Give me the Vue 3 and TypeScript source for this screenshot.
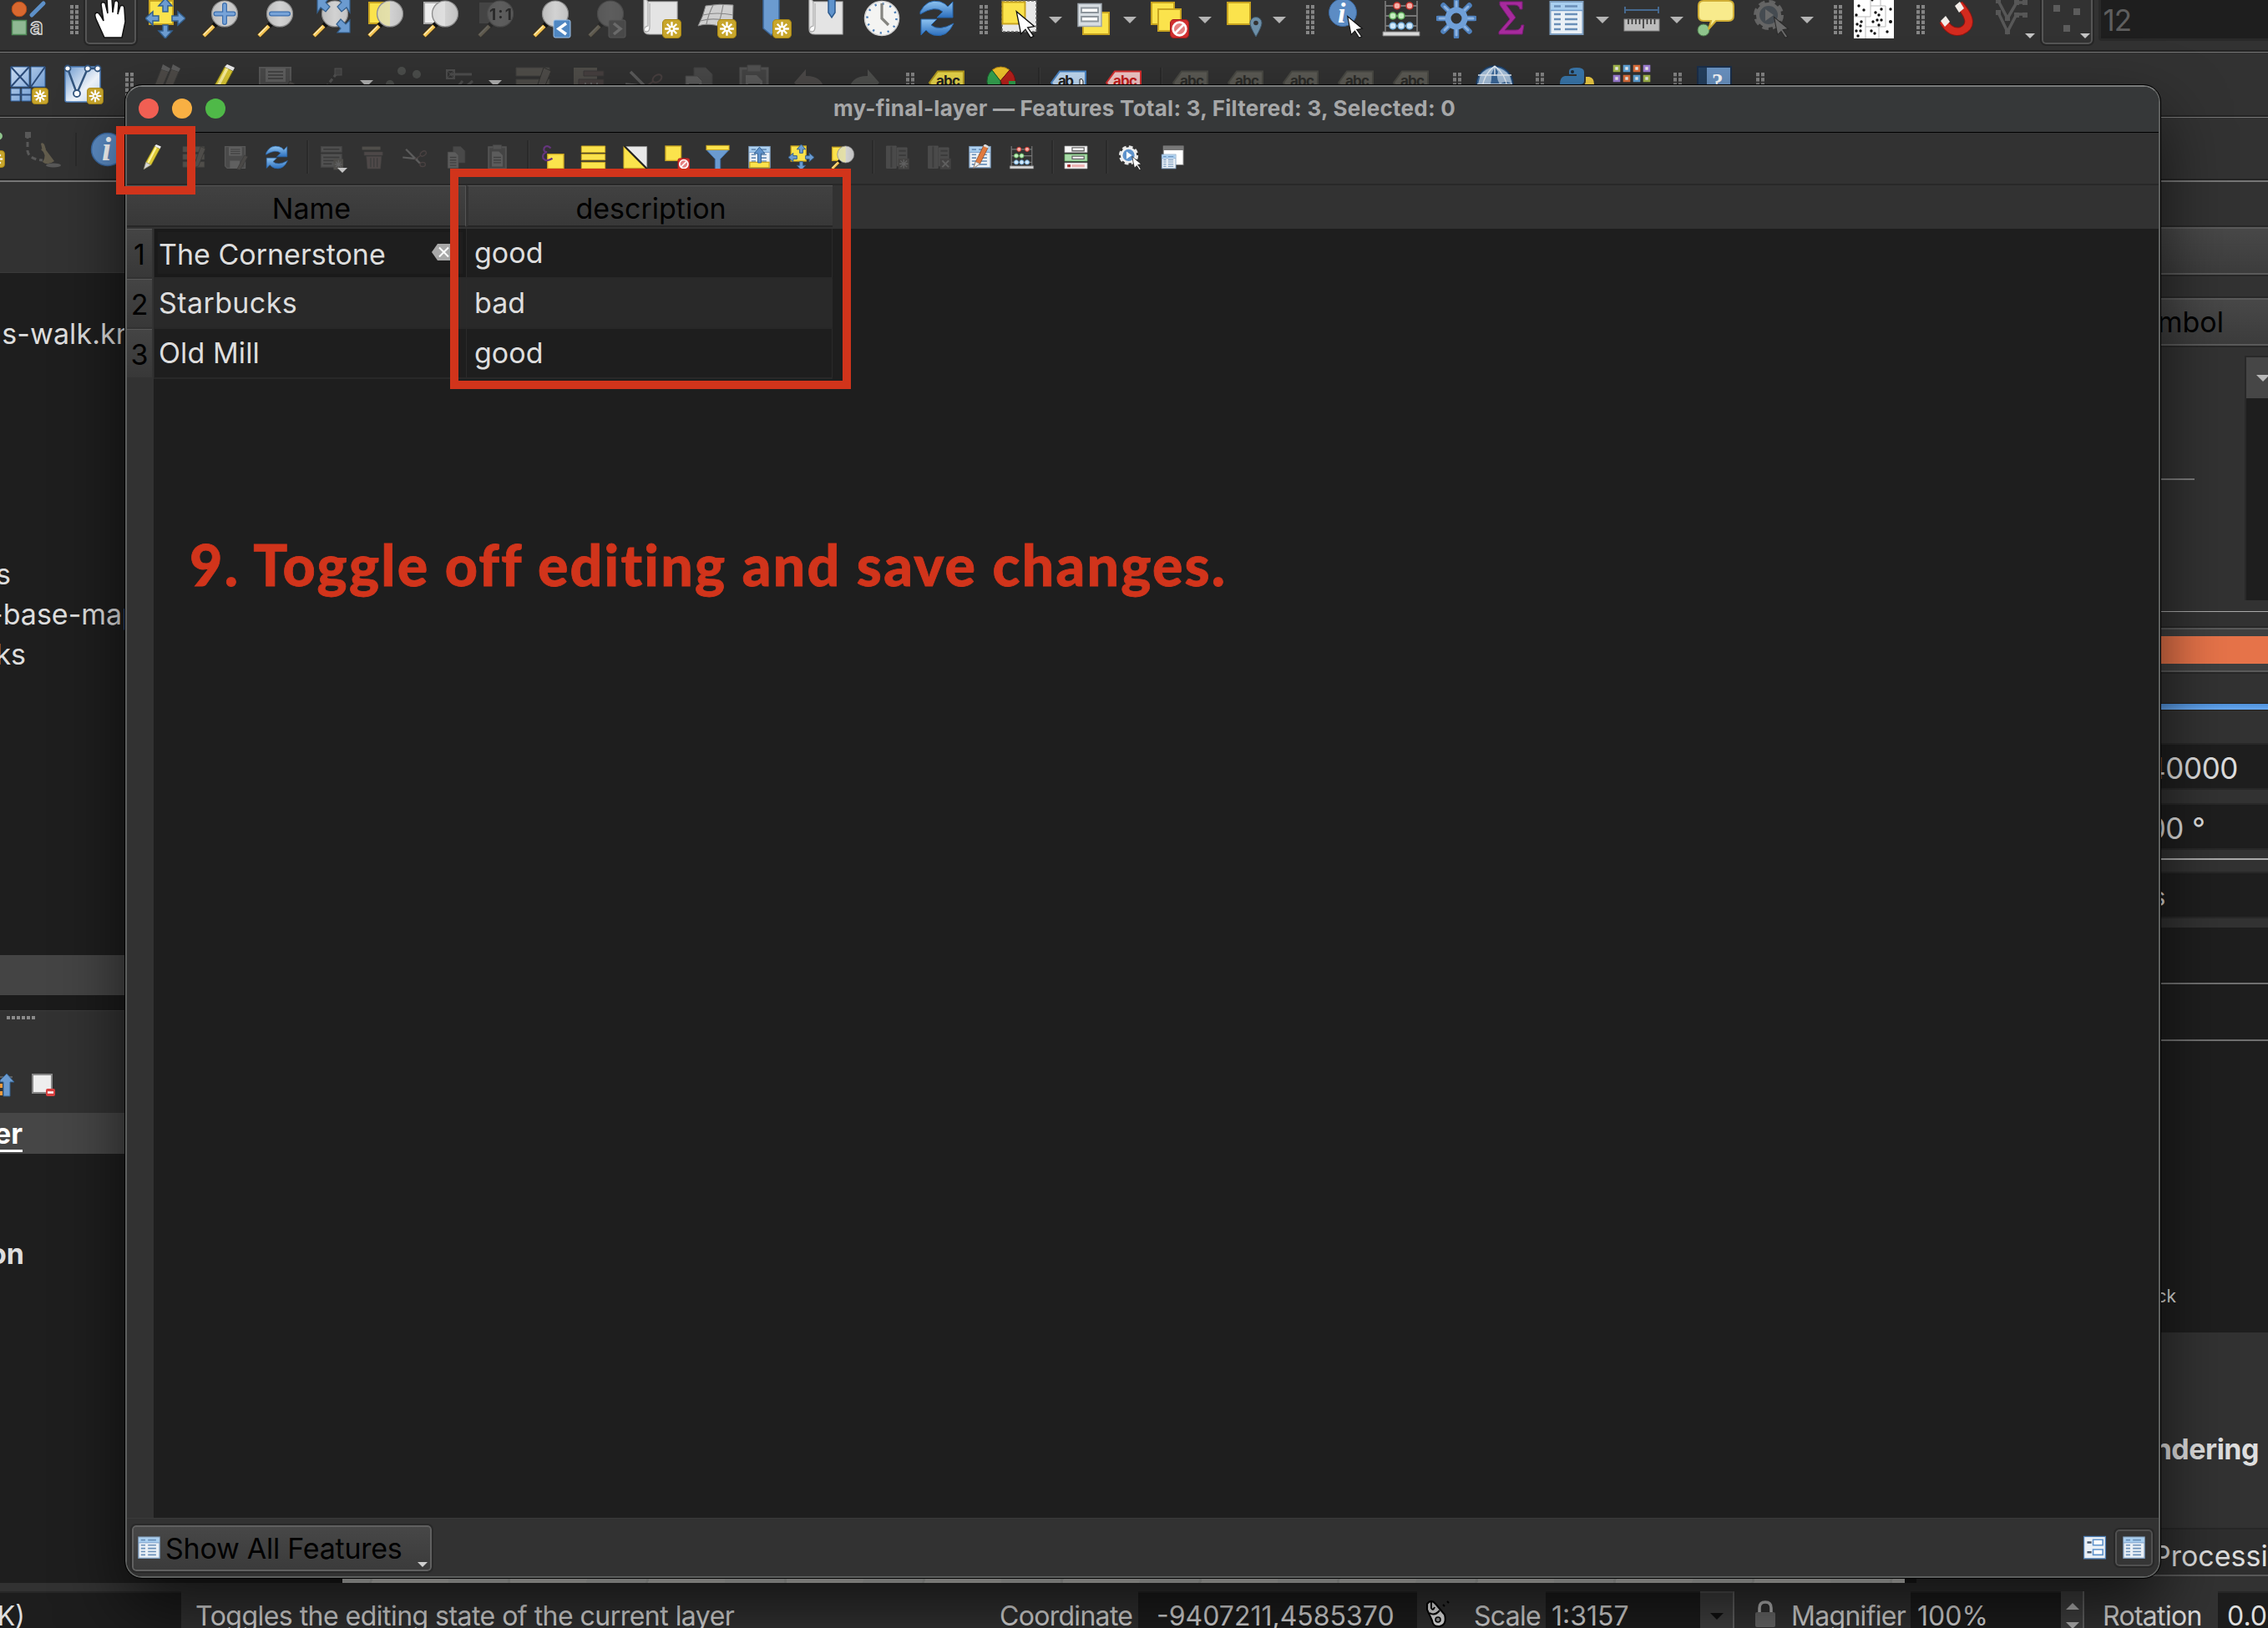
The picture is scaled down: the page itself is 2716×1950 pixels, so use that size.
<script setup lang="ts">
type Kind = 'icon' | 'grip' | 'sep' | 'drop'
interface Item { kind: Kind; name: string; off: boolean; framed: boolean; menu: boolean }

// "|" separator, ":" grip, "v" drop arrow; suffix "-" disabled, "#" framed, "+" corner menu arrow
function parse(spec: string): Item[] {
  return spec.split(' ').map((t) => {
    const kind: Kind = t === '|' ? 'sep' : t === ':' ? 'grip' : t === 'v' ? 'drop' : 'icon'
    return {
      kind,
      name: 'i-' + t.replace(/[-#+]/g, ''),
      off: t.includes('-'),
      framed: t.includes('#'),
      menu: t.includes('+'),
    }
  })
}

const navBar = parse(
  'style : hand# pansel zoomin zoomout zoomfull zoomsel zoomlayer zoomone- zoomlast zoomnext- newmap newmesh newmark marks clock refresh ' +
  ': select v formsel v deselect v locsel v : identify abacus gear sigma table v ruler v tip runact- v : dots : magnet vertex-+ points-#+',
)
const editBar = parse(
  'mesh vlayer : pencils- pencil save- node- v scatter- nodes- v tabedit- tabdel- scissors- copy- paste- undo- redo- ' +
  ': abc pie | abblue abcred | abcgrey abcgrey abcgrey abcgrey abcgrey : globe : python plugins : help :',
)
const tableBar = parse(
  'pencil tabedit- save- refresh | addrow-+ trash- scissors- copy- paste- | expr selall invert desel1 filter totop pansel zoomsel ' +
  '| addcol- delcol- editcol abacus | condfmt | runact dock',
)

interface Row { id: number; name: string; description: string }
const rows: Row[] = [
  { id: 1, name: 'The Cornerstone', description: 'good' },
  { id: 2, name: 'Starbucks', description: 'bad' },
  { id: 3, name: 'Old Mill', description: 'good' },
]
</script>

<template>
  <div class="screen">
    <svg class="defs" width="0" height="0">
      <defs>
        <linearGradient id="g-lens" x1="0" x2="1"><stop offset="0" stop-color="#bdbdbd" /><stop offset=".5" stop-color="#d2d2d2" /><stop offset="1" stop-color="#c2c2c2" /></linearGradient>
        <linearGradient id="g-blue" x1="0" x2="0" y1="0" y2="1"><stop offset="0" stop-color="#8ec3f0" /><stop offset="1" stop-color="#2c6fbe" /></linearGradient>
        <linearGradient id="g-mesh" x1="0" x2="1" y1="0" y2="1"><stop offset="0" stop-color="#c9dcf2" /><stop offset="1" stop-color="#5f8fcb" /></linearGradient>
        <linearGradient id="g-mesh2" x1="0" x2="1" y1="0" y2="1"><stop offset="0" stop-color="#6f9bd0" /><stop offset=".6" stop-color="#f0f5fb" /><stop offset="1" stop-color="#c4d8ee" /></linearGradient>

        <symbol id="p-lens" viewBox="0 0 48 48">
          <path d="M3.5 45.500L16 33" stroke="#3b3120" stroke-width="7" />
          <path d="M4 45L16 33" stroke="#f5c452" stroke-width="4.500" />
          <path d="M4 43.500L14 33.500" stroke="#fff0c0" stroke-width="1.300" />
          <path d="M16 33L20.500 28.500" stroke="#111" stroke-width="6.500" />
          <circle cx="29" cy="18.500" r="15.500" fill="url(#g-lens)" stroke="#8c8c8c" stroke-width="1.200" />
        </symbol>
        <symbol id="p-star" viewBox="0 0 22 22">
          <rect x=".5" y=".5" width="21" height="21" rx="4" fill="#c8a62c" stroke="#a98714" />
          <path d="M11 3V19M3 11H19M5.500 5.500L16.500 16.500M16.500 5.500L5.500 16.500" stroke="#fff" stroke-width="2.300" />
          <circle cx="11" cy="11" r="3.200" fill="#fff" /><circle cx="11" cy="11" r="1.500" fill="#c8a62c" />
        </symbol>
        <symbol id="p-no" viewBox="0 0 22 22">
          <rect x=".5" y=".5" width="21" height="21" rx="4" fill="#cf2f2f" stroke="#a31b1b" />
          <circle cx="11" cy="11" r="7.500" fill="#e58080" stroke="#fff" stroke-width="2.500" /><path d="M6 16L16 6" stroke="#fff" stroke-width="2.500" />
        </symbol>
        <symbol id="p-cursor" viewBox="0 0 28 38">
          <path d="M2 2L26 22L17 23.500L25 35L21 37L14 26L8 32Z" fill="#fff" stroke="#111" stroke-width="1.500" />
        </symbol>
        <symbol id="p-arrows" viewBox="0 0 48 48">
          <path d="M24 0L32 9H27V16H21V9H16ZM24 48L32 39H27V32H21V39H16ZM0 24L9 16V21H16V27H9V32ZM48 24L39 16V21H32V27H39V32Z" fill="#6b9bd0" stroke="#33608f" stroke-width="1.500" />
        </symbol>
        <symbol id="p-roll" viewBox="0 0 48 48">
          <path d="M8 4H43V43H10Q3 43 3 37V2Q7 0 8 6Z" fill="#e4e4e4" stroke="#b5b5b5" stroke-width="1.200" /><path d="M8 6V33Q3 34 3.500 39Q10 42 10 34V6" fill="#fafafa" stroke="#aaa" stroke-width="1.200" />
        </symbol>
        <symbol id="p-tag" viewBox="0 0 48 48">
          <path d="M3 22L13 8.500H44V36H13Z" stroke-width="2" />
        </symbol>

        <symbol id="i-style" viewBox="0 0 48 48">
          <circle cx="14" cy="13" r="8.800" fill="#d9682f" stroke="#b54c18" /><path d="M29 20L43 6" stroke="#5d90c8" stroke-width="5" stroke-linecap="round" />
          <rect x="5.500" y="26.500" width="17" height="17" fill="#8fb893" stroke="#4f8a57" stroke-width="1.500" />
          <text x="27" y="43" font-size="27" font-weight="700" fill="#444" stroke="#ddd" stroke-width="1.300">a</text>
        </symbol>
        <symbol id="i-hand" viewBox="0 0 48 48">
          <path d="M17 47L7 25Q4 18 8 17Q11 17 16 27L13 7Q14 3 18 6L21 18L20 0H26L27 17L29 4Q33 1 34 6L33 19L36 9Q41 7 41 13L42 28L38 47Z" fill="#fff" stroke="#111" stroke-width="1.500" />
        </symbol>
        <symbol id="i-pansel" viewBox="0 0 48 48"><rect x="5" y="3" width="28" height="28" fill="#fbe34c" stroke="#c8a420" stroke-width="2" /><use href="#p-arrows" /></symbol>
        <symbol id="i-zoomin" viewBox="0 0 48 48"><use href="#p-lens" /><path d="M29 8V29M18.500 18.500H39.500" stroke="#3c6fae" stroke-width="6" stroke-linecap="round" /><path d="M29 8V29M18.500 18.500H39.500" stroke="#77a3d8" stroke-width="3.500" stroke-linecap="round" /></symbol>
        <symbol id="i-zoomout" viewBox="0 0 48 48"><use href="#p-lens" /><path d="M19 18.500H39" stroke="#3c6fae" stroke-width="6" stroke-linecap="round" /><path d="M19 18.500H39" stroke="#77a3d8" stroke-width="3.500" stroke-linecap="round" /></symbol>
        <symbol id="i-zoomfull" viewBox="0 0 48 48"><use href="#p-lens" /><path d="M8 0H22L18 5L23 10L18 16L12 11L8 17ZM47 0H33L37 5L32 10L37 16L43 11L47 17ZM47 41H32L36 36L31 31L36 25L42 31L47 26Z" fill="#6b9bd0" stroke="#33608f" stroke-width="1.200" /></symbol>
        <symbol id="i-zoomsel" viewBox="0 0 48 48"><rect x="4" y="5" width="22" height="25" fill="#fbe34c" stroke="#c8a420" stroke-width="2" /><use href="#p-lens" /><path d="M29 4A14.500 14.500 0 0 0 29 33Z" fill="#e9e3a0" opacity=".8" /></symbol>
        <symbol id="i-zoomlayer" viewBox="0 0 48 48"><rect x="4" y="5" width="22" height="25" fill="#eee" stroke="#aaa" stroke-width="2" /><use href="#p-lens" /><path d="M29 4A14.500 14.500 0 0 0 29 33Z" fill="#e6e6e6" opacity=".7" /></symbol>
        <symbol id="i-zoomone" viewBox="0 0 48 48"><rect x="4" y="5" width="22" height="25" fill="#777" /><use href="#p-lens" /><text x="16" y="26" font-size="19" font-weight="700" fill="#111" textLength="27">1:1</text></symbol>
        <symbol id="i-zoomlast" viewBox="0 0 48 48"><use href="#p-lens" /><rect x="27" y="26" width="20" height="21" rx="2" fill="#4f87c2" stroke="#9fc2e8" /><path d="M42 30L33 36.500L42 43" fill="none" stroke="#fff" stroke-width="3.500" /></symbol>
        <symbol id="i-zoomnext" viewBox="0 0 48 48"><use href="#p-lens" /><rect x="27" y="26" width="20" height="21" rx="2" fill="#888" stroke="#bbb" /><path d="M33 30L41 36.500L33 43" fill="none" stroke="#fff" stroke-width="3.500" /></symbol>
        <symbol id="i-newmap" viewBox="0 0 48 48"><use href="#p-roll" /><use href="#p-star" x="25" y="25" width="23" height="23" /></symbol>
        <symbol id="i-newmesh" viewBox="0 0 48 48"><path d="M2 33Q8 22 11 9Q28 6 44 8L43 38L22 32Q10 30 2 33Z" fill="#cfcfcf" stroke="#888" /><path d="M8 20Q24 16 44 20M5 27Q22 22 44 29M20 8Q14 20 12 31M32 8Q30 20 26 33" fill="none" stroke="#888" stroke-width="1.200" /><use href="#p-star" x="25" y="25" width="23" height="23" /></symbol>
        <symbol id="i-newmark" viewBox="0 0 48 48"><path d="M14 0H33V36L23.500 44L14 36Z" fill="#6b9bd0" stroke="#3a6598" stroke-width="1.500" /><use href="#p-star" x="25" y="25" width="23" height="23" /></symbol>
        <symbol id="i-marks" viewBox="0 0 48 48"><use href="#p-roll" /><path d="M26 0H34V17L30 23L26 17Z" fill="#5f93cc" stroke="#2d5a8e" stroke-width="1.500" /></symbol>
        <symbol id="i-clock" viewBox="0 0 48 48"><circle cx="24" cy="24" r="20.500" fill="#f4f4f2" stroke="#cfcfcf" stroke-width="1.500" /><circle cx="24" cy="24" r="17.500" fill="none" stroke="#4c7fb8" stroke-width="2.500" stroke-dasharray="2.200 6.960" /><path d="M24 6V24L32 32" fill="none" stroke="#858580" stroke-width="3.200" /></symbol>
        <symbol id="i-refresh" viewBox="0 0 48 48">
          <path d="M4 16Q12 0 28 4Q34 6 37 10L43 4V23H24L31 16Q22 8 4 19Z" fill="url(#g-blue)" stroke="#2766ad" />
          <path d="M44 30Q36 48 20 44Q14 42 11 38L5 44V25H24L17 32Q26 40 44 30Z" fill="url(#g-blue)" stroke="#2766ad" />
        </symbol>
        <symbol id="i-select" viewBox="0 0 48 48"><rect x="3" y="3" width="41" height="37" fill="#e8e8e8" stroke="#666" stroke-dasharray="3 2" stroke-width="1.500" /><rect x="3.500" y="4.500" width="27" height="26" fill="#fbe34c" stroke="#c8a420" stroke-width="2" /><use href="#p-cursor" x="17" y="14" width="28" height="34" /></symbol>
        <symbol id="i-formsel" viewBox="0 0 48 48"><rect x="10" y="17" width="31" height="26" fill="#fbe34c" stroke="#c8a420" stroke-width="2" /><rect x="4" y="6.500" width="28" height="27" fill="#d7dde2" stroke="#9aa3ab" stroke-width="1.500" /><path d="M8 11.500H28V17H8ZM8 22H28V27.500H8Z" fill="#fff" stroke="#8d959c" stroke-width="1.800" /></symbol>
        <symbol id="i-deselect" viewBox="0 0 48 48"><rect x="3" y="5" width="27" height="26" fill="#fbe34c" stroke="#c8a420" stroke-width="2" /><rect x="11" y="13" width="27" height="26" fill="#fbe34c" stroke="#c8a420" stroke-width="2" /><use href="#p-no" x="25" y="25" width="23" height="23" /></symbol>
        <symbol id="i-locsel" viewBox="0 0 48 48"><rect x="4" y="5" width="27" height="26" fill="#fbe34c" stroke="#c8a420" stroke-width="2" /><path d="M38 46Q31 34 31 29.500A7 7 0 0 1 45 29.500Q45 34 38 46Z" fill="#6d8fa8" stroke="#405a6e" /><circle cx="38" cy="29.500" r="2.800" fill="#333" /></symbol>
        <symbol id="i-info" viewBox="0 0 48 48"><circle cx="24" cy="24" r="19.500" fill="#5c8cc4" stroke="#3a68a0" stroke-width="1.500" /><text x="17" y="37" font-size="40" font-weight="700" font-style="italic" fill="#fff" class="serif">i</text></symbol>
        <symbol id="i-identify" viewBox="0 0 48 48"><circle cx="20" cy="17" r="16.500" fill="#5c8cc4" stroke="#3a68a0" /><text x="14" y="29" font-size="34" font-weight="700" font-style="italic" fill="#fff" class="serif">i</text><use href="#p-cursor" x="22" y="20" width="25" height="28" /></symbol>
        <symbol id="i-abacus" viewBox="0 0 48 48">
          <path d="M5 3V42M43 3V42M5 9H43M5 21H43M5 33H43" stroke="#777" stroke-width="1.800" />
          <path d="M2 40H46V45H2Z" fill="#d8d8d8" stroke="#777" />
          <g stroke-width="1.500"><g fill="#f7b0a8" stroke="#c8362e"><circle cx="19" cy="9" r="4" /><circle cx="34" cy="9" r="4" /></g><g fill="#c4eec0" stroke="#5fae5c"><circle cx="14" cy="21" r="4" /><circle cx="24" cy="21" r="4" /></g><g fill="#d2e9fb" stroke="#6ba3d0"><circle cx="14" cy="33" r="4" /><circle cx="24" cy="33" r="4" /><circle cx="34" cy="33" r="4" /></g></g>
        </symbol>
        <symbol id="i-gear" viewBox="0 0 48 48"><path d="M24 2V12M24 36V46M2 24H12M36 24H46M8.500 8.500L16 16M32 32L39.500 39.500M39.500 8.500L32 16M16 32L8.500 39.500" stroke="#4f81bd" stroke-width="6.500" stroke-linecap="round" /><path d="M24 4V12M24 36V44M4 24H12M36 24H44M10 10L16 16M32 32L38 38M38 10L32 16M16 32L10 38" stroke="#8db4e2" stroke-width="3" stroke-linecap="round" /><circle cx="24" cy="24" r="10" fill="none" stroke="#6f9fd8" stroke-width="7" /></symbol>
        <symbol id="i-sigma" viewBox="0 0 48 48"><path d="M10 4H37V13H34Q33 8 28 8H18L29 23L16 38H29Q35 38 36 32H39L37 43H9V40L22 25L10 8Z" fill="#a62a9c" stroke="#7d1a78" /></symbol>
        <symbol id="i-table" viewBox="0 0 48 48"><rect x="4.500" y="4" width="39" height="39" fill="#eaf0f6" stroke="#7f9fc0" stroke-width="2" /><path d="M5.500 5H42.500V14H5.500Z" fill="#a9cff0" /><path d="M5 14.500H43" stroke="#6d98c8" stroke-width="1.500" /><path d="M9 9.500H17M22 9.500H37M9 19H17M9 25H17M9 31H17M9 37H17M22 19H37M22 25H37M22 31H37M22 37H37" stroke="#6a8fb8" stroke-width="2.400" /></symbol>
        <symbol id="i-ruler" viewBox="0 0 48 48"><path d="M4 14H44M4 10V18M44 10V18" stroke="#46698f" stroke-width="2" /><rect x="3" y="25" width="42" height="14" fill="#bdbdbd" stroke="#888" /><path d="M8 25V31M12.500 25V31M17 25V31M21.500 25V31M26 25V36M30.500 25V31M35 25V31M39.500 25V31" stroke="#333" stroke-width="1.600" /></symbol>
        <symbol id="i-tip" viewBox="0 0 48 48"><circle cx="9" cy="38" r="7" fill="#8fc48c" stroke="#4d7e4c" /><path d="M9 3H39Q45 3 45 9V21Q45 27 39 27H24L15 37L18 27H9Q3 27 3 21V9Q3 3 9 3Z" fill="#f8eb8c" stroke="#d0ae35" stroke-width="2" /></symbol>
        <symbol id="i-runact" viewBox="0 0 48 48"><circle cx="21" cy="20" r="15" fill="none" stroke="#e6e6e6" stroke-width="6" stroke-dasharray="7 4.780" /><circle cx="21" cy="20" r="13" fill="#5f93cc" stroke="#f0f0f0" stroke-width="4" /><path d="M17 13L27 20L17 27Z" fill="#fff" /><use href="#p-cursor" x="24" y="21" width="24" height="27" /></symbol>
        <symbol id="i-dots" viewBox="0 0 48 48"><path d="M0 0H48V48H0Z" fill="#fff" /><path d="M0 22H14V48M14 22V22H20V0M20 9H38V34H14M30 34V48M32 0V9" fill="none" stroke="#bbb" /><g fill="#111"><circle cx="6" cy="9" r="1.700" /><circle cx="12" cy="14" r="1.700" /><circle cx="3" cy="20" r="1.700" /><circle cx="22" cy="2" r="1.500" /><circle cx="26" cy="17" r="1.700" /><circle cx="33" cy="13" r="1.700" /><circle cx="30" cy="20" r="1.700" /><circle cx="44" cy="13" r="1.700" /><circle cx="44" cy="28" r="2" /><circle cx="33" cy="26" r="1.700" /><circle cx="28" cy="26" r="1.700" /><circle cx="23" cy="28" r="1.700" /><circle cx="30" cy="32" r="1.700" /><circle cx="4" cy="31" r="1.700" /><circle cx="9" cy="28" r="1.700" /><circle cx="8" cy="33" r="1.700" /><circle cx="3" cy="39" r="1.700" /><circle cx="8" cy="39" r="1.700" /><circle cx="5" cy="45" r="1.700" /><circle cx="21" cy="39" r="1.700" /><circle cx="25" cy="42" r="1.700" /><circle cx="40" cy="40" r="1.700" /></g></symbol>
        <symbol id="i-magnet" viewBox="0 0 48 48"><path d="M8 27Q17 43 30 39Q41 34 38 24Q36 17 27 7" fill="none" stroke="#8c1410" stroke-width="10.500" /><path d="M8 27Q17 43 30 39Q41 34 38 24Q36 17 27 7" fill="none" stroke="#d32a1e" stroke-width="8.500" /><path d="M5 27L11 21L16 28L10 34ZM22 9L28 4L33 12L27 17Z" fill="#f3ede8" /></symbol>
        <symbol id="i-vertex" viewBox="0 0 48 48"><path d="M8 17L19 40L30 19H40M8 3L19 24L30 5H40" fill="none" stroke="#bbb" stroke-width="3.500" /><path d="M5 0H11V6H5ZM5 14H11V20H5ZM16 21H22V27H16ZM16 37H22V43H16ZM27 2H33V8H27ZM37 2H43V8H37ZM27 17H33V23H27ZM37 17H43V23H37Z" fill="#bbb" /></symbol>
        <symbol id="i-points" viewBox="0 0 48 48"><path d="M8 8H16V16H8ZM32 12H40V20H32ZM20 32H28V40H20Z" fill="#ccc" /></symbol>

        <symbol id="i-mesh" viewBox="0 0 48 48"><path d="M3 3H25V27H3ZM27 3H44V27H27ZM3 29H14V44H3ZM16 29H27V44H16Z" fill="url(#g-mesh)" stroke="#2f5f9a" /><path d="M3 3L25 27M25 3L3 27M44 3L27 27M3 36.500H27" stroke="#2a4a78" stroke-width="2" /><use href="#p-star" x="28" y="28" width="20" height="20" /></symbol>
        <symbol id="i-vlayer" viewBox="0 0 48 48"><rect x="2" y="3" width="42" height="42" rx="2" fill="url(#g-mesh2)" stroke="#4d7fba" stroke-width="1.500" /><path d="M5 5L16 35L29 5H42" fill="none" stroke="#34567f" stroke-width="2.500" /><g fill="#fff" stroke="#34567f" stroke-width="1.800"><circle cx="5" cy="5" r="3.500" /><circle cx="16" cy="35" r="4" /><circle cx="29" cy="5" r="3.500" /><circle cx="41" cy="5" r="3.500" /></g><use href="#p-star" x="28" y="28" width="20" height="20" /></symbol>
        <symbol id="i-pencil" viewBox="0 0 48 48"><path d="M8 46L12 32L28 3L38 8L22 38Z" fill="#dcc935" stroke="#6b6412" /><path d="M16 34L31 5" stroke="#fff39c" stroke-width="3.500" /><path d="M28 3L31 0L40 4L38 8Z" fill="#eee" /><path d="M8 46L12 33L21 38Z" fill="#d8d8d8" stroke="#888" /></symbol>
        <symbol id="i-pencils" viewBox="0 0 48 48"><path d="M2 46L18 6L27 9L14 40ZM14 46L30 6L39 9L26 40Z" fill="#a98e72" stroke="#554" /><path d="M18 6L20 0L29 5L27 9ZM30 6L32 0L41 5L39 9Z" fill="#ccc" /></symbol>
        <symbol id="i-save" viewBox="0 0 48 48"><path d="M4 4H41V44H8L4 40Z" fill="#8c8c8c" stroke="#bbb" stroke-width="2" /><path d="M11 5H35V21H11ZM13 30H31V44H13Z" fill="#ddd" /><path d="M14 9H32M14 13H32M14 17H32" stroke="#777" stroke-width="2" /><path d="M26 46L40 20L46 23L32 47Z" fill="#9a8775" stroke="#444" /></symbol>
        <symbol id="i-node" viewBox="0 0 48 48"><path d="M12 34L31 10" stroke="#aaa" stroke-width="3" stroke-dasharray="5 3" /><rect x="28" y="5" width="8" height="8" fill="#777" stroke="#aaa" /></symbol>
        <symbol id="i-scatter" viewBox="0 0 48 48"><g fill="#8aa08a"><circle cx="20" cy="8" r="5" /><circle cx="38" cy="12" r="5" /><circle cx="6" cy="24" r="5" /><circle cx="28" cy="34" r="5" /></g></symbol>
        <symbol id="i-nodes" viewBox="0 0 48 48"><path d="M12 12H38M20 28L27 20M32 26L39 20" stroke="#999" stroke-width="3" /><rect x="8" y="7" width="9" height="10" fill="none" stroke="#999" stroke-width="2" /><path d="M9 8L16 16M16 8L9 16" stroke="#999" /></symbol>
        <symbol id="i-tabedit" viewBox="0 0 48 48"><path d="M3 4H43V14H3ZM3 18H43V28H3ZM3 32H43V42H3Z" fill="#a99a78" stroke="#665" /><path d="M22 44L36 4L45 8L32 40Z" fill="#a9937a" stroke="#332" /></symbol>
        <symbol id="i-tabdel" viewBox="0 0 48 48"><path d="M6 4H34V40H6Z" fill="#a99a78" /><path d="M18 8H42V14H18ZM12 18H42V44H12Z" fill="#a0605a" stroke="#544" /><path d="M20 22V40M27 22V40M34 22V40" stroke="#ddd" stroke-width="2" /></symbol>
        <symbol id="i-trash" viewBox="0 0 48 48"><path d="M4 4H38V10H4Z" fill="#a99a78" /><path d="M8 14H42V20H8ZM12 22H40L38 45H14Z" fill="#b08078" stroke="#766" /><path d="M20 25V42M26 25V42M32 25V42" stroke="#555" stroke-width="2" /></symbol>
        <symbol id="i-scissors" viewBox="0 0 48 48"><path d="M2 24L30 27M8 9L34 35" stroke="#ccc" stroke-width="3.500" /><ellipse cx="40" cy="17" rx="6" ry="4" transform="rotate(-35 40 17)" fill="none" stroke="#b06060" stroke-width="2" /><ellipse cx="39" cy="37" rx="5" ry="4" fill="none" stroke="#b06060" stroke-width="2" /><path d="M24 28L36 20" stroke="#b06060" stroke-width="2" /></symbol>
        <symbol id="i-copy" viewBox="0 0 48 48"><path d="M18 4H32L40 12V34H18Z" fill="#888" stroke="#666" /><path d="M8 14H22L28 20V44H8Z" fill="#ccc" stroke="#777" /><path d="M12 24H24M12 29H24M12 34H24M12 39H24" stroke="#666" stroke-width="2" /></symbol>
        <symbol id="i-paste" viewBox="0 0 48 48"><path d="M8 5H40V45H8Z" fill="#777" stroke="#aaa" stroke-width="3" /><path d="M16 1H32V9H16Z" fill="#aaa" stroke="#777" /><path d="M14 13H27L34 20V41H14Z" fill="#ccc" /><path d="M17 24H31M17 29H31M17 34H31" stroke="#666" stroke-width="2" /></symbol>
        <symbol id="i-undo" viewBox="0 0 48 48"><path d="M6 22L20 6V14Q42 14 42 34Q34 24 20 27V36Z" fill="#a38b7a" /></symbol>
        <symbol id="i-redo" viewBox="0 0 48 48"><path d="M42 22L28 6V14Q6 14 6 34Q14 24 28 27V36Z" fill="#9aa296" /></symbol>
        <symbol id="i-abc" viewBox="0 0 48 48"><use href="#p-tag" fill="#ead84b" stroke="#b49b1e" /><text x="11" y="26" font-size="17" font-weight="700" fill="#222" textLength="29">abc</text></symbol>
        <symbol id="i-abcred" viewBox="0 0 48 48"><use href="#p-tag" fill="#f5c9c9" stroke="#d92f2f" /><text x="11" y="26" font-size="17" font-weight="700" fill="#c81e1e" textLength="29">abc</text></symbol>
        <symbol id="i-abblue" viewBox="0 0 48 48"><use href="#p-tag" fill="#c2dcf5" stroke="#4b86c6" /><text x="11" y="26" font-size="17" font-weight="700" fill="#222" textLength="19">ab</text><path d="M37 30V18Q40 16 41 20V30" fill="#fff" stroke="#222" /></symbol>
        <symbol id="i-abcgrey" viewBox="0 0 48 48"><use href="#p-tag" fill="#5c5b55" stroke="#4a4a44" /><text x="11" y="26" font-size="17" font-weight="700" fill="#2d2d2a" textLength="29">abc</text></symbol>
        <symbol id="i-pie" viewBox="0 0 48 48"><path d="M22 20L12 7A16 16 0 0 1 33 7Z" fill="#f2c52c" stroke="#a87d12" /><path d="M22 20L33 7A17 17 0 0 1 30 36Z" fill="#b8201c" stroke="#711" /><path d="M22 20L12 7A17 17 0 0 0 22 37Z" fill="#35a552" stroke="#175f2b" /><rect x="32" y="20" width="8" height="12" fill="#2f9e4c" /></symbol>
        <symbol id="i-globe" viewBox="0 0 48 48"><circle cx="25" cy="24" r="22" fill="#3d6a9c" stroke="#1d3c60" stroke-width="1.500" /><path d="M25 3Q14 5 8 12L5 24Q14 22 17 34Q22 20 21 12ZM25 3Q38 6 43 14L46 24Q38 18 31 24Q26 16 29 9Z" fill="#a9c3de" /><path d="M25 2V14M5 13H45M4 24H46M25 2Q12 12 10 28M25 2Q38 12 40 28" fill="none" stroke="#e8f0f8" stroke-width="1.400" /></symbol>
        <symbol id="i-python" viewBox="0 0 48 48"><path d="M15 8Q15 4 24 4Q33 4 33 9V20Q33 24 28 24H18Q13 24 13 30V33H8Q4 33 4 24Q4 15 10 14H24V12H15Z" fill="#3a78ad" /><path d="M35 15H39Q45 16 45 24Q45 34 39 34H24V36H33V41Q30 45 24 45Q15 44 15 39V30Q15 27 20 26H30Q35 25 35 20Z" fill="#f2cf45" /><circle cx="19" cy="9" r="2" fill="#1c2c3a" /></symbol>
        <symbol id="i-plugins" viewBox="0 0 48 48"><g stroke-width="2.600" fill="#eee"><path d="M3 2H9V8H3ZM39 14H45V20H39ZM3 26H9V32H3Z" stroke="#a3b84c" /><path d="M15 2H21V8H15ZM27 14H33V20H27ZM15 26H21V32H15Z" stroke="#5fa4da" /><path d="M27 2H33V8H27ZM15 14H21V20H15ZM27 26H33V32H27Z" stroke="#e0703c" /><path d="M39 2H45V8H39ZM3 14H9V20H3ZM39 26H45V32H39Z" stroke="#a07fd8" /></g></symbol>
        <symbol id="i-help" viewBox="0 0 48 48"><rect x="4" y="3" width="40" height="40" fill="#6b94c4" stroke="#1b2f4a" stroke-width="2" /><path d="M5 4H15V42H5Z" fill="#25405f" /><text x="21" y="30" font-size="27" font-weight="700" fill="#fff" class="serif">?</text></symbol>
        <symbol id="i-brush" viewBox="0 0 48 48"><path d="M6 5V26Q8 36 24 37" fill="none" stroke="#777" stroke-width="3" stroke-dasharray="6 4" /><rect x="3" y="3" width="7" height="7" fill="#777" /><path d="M26 22L38 38Q30 44 24 39Q30 30 22 24ZM22 17Q24 15 26 18L28 24L24 26Z" fill="#8a7f62" /><ellipse cx="37" cy="43" rx="9" ry="2.500" fill="#777" /></symbol>

        <symbol id="i-addrow" viewBox="0 0 48 48"><path d="M4 4H42V14H4ZM4 18H42V42H4Z" fill="#aaa" stroke="#777" stroke-width="2" /><path d="M8 9H38M8 24H38M8 30H38M8 36H24" stroke="#555" stroke-width="3" /><rect x="27" y="27" width="18" height="20" fill="#9a937a" /><path d="M36 29V45M29 37H43M31 32L41 42M41 32L31 42" stroke="#ddd" stroke-width="1.800" /></symbol>
        <symbol id="i-expr" viewBox="0 0 48 48"><rect x="15" y="18" width="30" height="27" fill="#fbe34c" stroke="#c8a420" stroke-width="2" /><path d="M21 7Q14 0 9 6Q6 14 14 14Q4 17 7 26Q13 33 24 26" fill="none" stroke="#65357e" stroke-width="3.500" /></symbol>
        <symbol id="i-selall" viewBox="0 0 48 48"><path d="M2 3H46V15H2ZM2 18H46V29H2ZM2 33H46V45H2Z" fill="#fbe34c" stroke="#c8a420" stroke-width="1.500" /></symbol>
        <symbol id="i-invert" viewBox="0 0 48 48"><path d="M3 4V44H43Z" fill="#fbe34c" stroke="#c8a420" stroke-width="1.500" /><path d="M7 4H46V43Z" fill="#e9e9e9" stroke="#999" /><path d="M4 3L46 45" stroke="#222" stroke-width="3" /></symbol>
        <symbol id="i-desel1" viewBox="0 0 48 48"><rect x="3" y="3" width="29" height="27" fill="#fbe34c" stroke="#c8a420" stroke-width="2" /><use href="#p-no" x="25" y="25" width="24" height="23" /></symbol>
        <symbol id="i-filter" viewBox="0 0 48 48"><path d="M3 10H45L29 27V46H19V27Z" fill="#6b9bd0" stroke="#3d6ea8" stroke-width="1.500" /><rect x="3" y="2" width="42" height="8" fill="#fbe34c" stroke="#c8a420" stroke-width="1.500" /></symbol>
        <symbol id="i-totop" viewBox="0 0 48 48"><use href="#i-table" /><rect x="6" y="33" width="36" height="10" fill="#fbe34c" stroke="#c8a420" stroke-width="2" /><path d="M24 5L34 17H27V34H21V17H14Z" fill="#5f93cc" stroke="#33608f" stroke-width="1.500" /></symbol>
        <symbol id="i-addcol" viewBox="0 0 48 48"><path d="M4 3H22V44H4ZM24 6H42V40H24Z" fill="#8c8c8c" stroke="#aaa" /><path d="M13 4V43M27 12H40M27 20H40" stroke="#555" stroke-width="3" /><rect x="26" y="26" width="20" height="20" fill="#77736a" /><path d="M36 28V44M28 36H44M30 30L42 42M42 30L30 42" stroke="#ddd" stroke-width="2" /></symbol>
        <symbol id="i-delcol" viewBox="0 0 48 48"><path d="M4 3H22V44H4ZM24 6H42V40H24Z" fill="#8c8c8c" stroke="#aaa" /><path d="M13 4V43M27 12H40M27 20H40" stroke="#555" stroke-width="3" /><rect x="26" y="26" width="20" height="20" fill="#776f6f" /><path d="M30 30L42 42M42 30L30 42" stroke="#ddd" stroke-width="3" /></symbol>
        <symbol id="i-editcol" viewBox="0 0 48 48"><use href="#i-table" /><path d="M12 44L16 32L31 2L39 6L24 36Z" fill="#e07a3f" stroke="#7d3d16" /><path d="M12 44L16 32L24 36Z" fill="#eee" stroke="#777" /><path d="M30 3L33 -1L40 3L39 7Z" fill="#ddd" /></symbol>
        <symbol id="i-condfmt" viewBox="0 0 48 48"><path d="M3 3H45V15H3ZM3 34H45V45H3Z" fill="#f6f6f6" stroke="#999" /><path d="M3 18H45V31H3Z" fill="#a8dba8" stroke="#4f9a4f" /><path d="M17 6H39V12H17ZM17 22H39V27H17Z" fill="#fff" stroke="#666" stroke-width="2" /><path d="M8 37H14V42H8Z" fill="#a33" /><path d="M16 37H40V42H16Z" fill="#efb4b4" /></symbol>
        <symbol id="i-dock" viewBox="0 0 48 48"><rect x="8" y="3" width="37" height="35" fill="#fff" stroke="#777" stroke-width="1.500" /><path d="M8 3H45V11H8Z" fill="#777" /><use href="#i-table" x="0" y="16" width="36" height="32" /></symbol>
        <symbol id="i-form" viewBox="0 0 48 48"><rect x="4" y="3" width="40" height="41" fill="#eaf0f6" stroke="#4f7fb5" stroke-width="2" /><path d="M10 14H18M10 32H18" stroke="#46566b" stroke-width="4" /><path d="M21 9H39V19H21ZM21 27H39V37H21Z" fill="#fff" stroke="#5f93cc" stroke-width="2.500" /></symbol>
      </defs>
    </svg>

    <!-- main application window -->
    <div class="bar bar1">
      <div v-for="(it, i) in navBar" :key="i" :class="['cell', it.kind, { off: it.off, framed: it.framed }]">
        <svg v-if="it.kind === 'icon'" class="ico"><use :href="'#' + it.name" /></svg>
        <i v-if="it.menu" class="tri small"></i>
      </div>
      <div class="tolerance">12</div>
    </div>
    <div class="bar bar2">
      <div v-for="(it, i) in editBar" :key="i" :class="['cell', it.kind, { off: it.off }]">
        <svg v-if="it.kind === 'icon'" class="ico"><use :href="'#' + it.name" /></svg>
      </div>
    </div>
    <div class="bar bar3">
      <div class="sliver"><i class="leaf"></i><svg class="star"><use href="#p-star" /></svg></div>
      <svg class="ico dim"><use href="#i-brush" /></svg>
      <i class="vsep"></i>
      <svg class="ico"><use href="#i-info" /></svg>
    </div>

    <div class="body">
      <div class="left">
        <div class="lhead"></div>
        <div class="tree">
          <div class="t t1">us-walk.km</div>
          <div class="t t2"><span>s</span></div>
          <div class="t t3">-base-map</div>
          <div class="t t4"><span>ks</span></div>
        </div>
        <div class="hl"></div>
        <div class="split"></div>
        <div class="ltools">
          <i class="hgrip"></i>
          <div class="licons">
            <svg width="18" height="30" viewBox="0 0 18 30"><path d="M0 5H15" stroke="#888" /><path d="M0 13H3V18H0ZM0 22H3V27H0Z" fill="#f09a3c" /><path d="M8 1L17 11H12V28H4V11H0V9Z" fill="#6b9bd0" stroke="#33608f" /></svg>
            <svg width="30" height="30" viewBox="0 0 30 30"><path d="M1 2H24V24H1Z" fill="#eee" stroke="#888" stroke-width="2" /><rect x="17" y="19" width="11" height="9" rx="2" fill="#d84040" /><path d="M19 23.500H26" stroke="#fff" stroke-width="2.500" /></svg>
          </div>
        </div>
        <div class="lsel"><span>er</span></div>
        <div class="llist"><span>on</span></div>
      </div>
      <div class="map"></div>
      <div class="right">
        <div class="rgap g1"></div>
        <div class="rbtn b1"></div>
        <div class="rgap g2"></div>
        <div class="rbtn b2"><span>Symbol</span></div>
        <div class="preview">
          <i class="rule"></i>
          <div class="combo"><b><i class="tri"></i></b></div>
        </div>
        <div class="colour"><div class="swatch"></div></div>
        <div class="slider"><i></i></div>
        <div class="rfield f1"><span>40000</span></div>
        <div class="rfield f2"><span>00</span><em>°</em></div>
        <div class="rfield f3"><span>s</span></div>
        <div class="rlist"><i></i><i></i><span>ck</span></div>
        <div class="render"><span>Rendering</span></div>
        <div class="proc"><span>Processing</span></div>
      </div>
    </div>

    <div class="status">
      <div class="sf s1"><span>K)</span></div>
      <div class="sl s2">Toggles the editing state of the current layer</div>
      <div class="sl s3">Coordinate</div>
      <div class="sf s4">-9407211,4585370</div>
      <div class="s5">
        <svg width="34" height="34" viewBox="0 0 34 34"><path d="M3 5Q8 -1 13 5L24 18Q27 30 18 32Q10 33 9 25L3 12Z" fill="#eee" stroke="#000" stroke-width="2" /><path d="M8 3V10Q10 14 12 9M6 16Q12 20 18 13" fill="none" stroke="#000" stroke-width="2" /><circle cx="16" cy="24" r="3" fill="#999" stroke="#000" stroke-width="1.500" /><path d="M22 6L24 8M27 2L29 4" stroke="#000" stroke-width="2" /></svg>
      </div>
      <div class="sl s6">Scale</div>
      <div class="sf s7">1:3157</div>
      <div class="sbtn"><i class="tri black"></i></div>
      <div class="s9"><svg width="26" height="34" viewBox="0 0 26 34"><path d="M6 16V9Q6 2 13 2Q20 2 20 9V16" fill="none" stroke="#bbb" stroke-width="3.500" /><rect x="1" y="14" width="24" height="18" rx="2" fill="#6a6a6a" /></svg></div>
      <div class="sl s10">Magnifier</div>
      <div class="sf s11">100%</div>
      <div class="spin"><i class="tri up"></i><i class="tri"></i></div>
      <div class="sl s13">Rotation</div>
      <div class="sf s14">0.0</div>
    </div>

    <!-- attribute table window -->
    <div class="win">
      <div class="title">
        <div class="lights"><i class="red"></i><i class="amber"></i><i class="green"></i></div>
        <span>my-final-layer — Features Total: 3, Filtered: 3, Selected: 0</span>
      </div>
      <div class="wtools">
        <div v-for="(it, i) in tableBar" :key="i" :class="['cell', it.kind, { off: it.off }]">
          <svg v-if="it.kind === 'icon'" class="ico"><use :href="'#' + it.name" /></svg>
          <i v-if="it.menu" class="tri small"></i>
        </div>
      </div>
      <div class="thead"><div class="h0"></div><div class="h1">Name</div><div class="h2">description</div></div>
      <div class="tbody">
        <div v-for="r in rows" :key="r.id" :class="['row', { alt: r.id === 2, edit: r.id === 1 }]">
          <div class="num"><span>{{ r.id }}</span></div>
          <div class="c1"><span>{{ r.name }}</span>
            <svg v-if="r.id === 1" width="30" height="20" viewBox="0 0 30 20"><path d="M0 10L7 0H30V20H7Z" fill="#a8a8a8" /><path d="M9 4.500L20 15.500M20 4.500L9 15.500" stroke="#fff" stroke-width="2" /></svg>
          </div>
          <div class="c2">{{ r.description }}</div>
        </div>
        <div class="gutter"></div>
      </div>
      <div class="wfoot">
        <div class="show"><svg class="ico"><use href="#i-table" /></svg><span>Show All Features</span><i class="tri small"></i></div>
        <div class="views">
          <svg class="ico"><use href="#i-form" /></svg>
          <div class="active"><svg class="ico"><use href="#i-table" /></svg></div>
        </div>
      </div>
    </div>

    <!-- tutorial annotations -->
    <div class="mark m1"></div>
    <div class="mark m2"></div>
    <div class="note">9. Toggle off editing and save changes.</div>
  </div>
</template>

<style>
html, body { margin: 0; background: #323232; overflow: hidden; }
</style>

<style scoped>
.screen { position: relative; width: 2716px; height: 1950px; overflow: hidden; background: #323232; color: #dedede; font-family: Inter, "Liberation Sans", sans-serif; font-size: 34px; display: flex; flex-direction: column; white-space: nowrap; }
.screen * { box-sizing: border-box; }
.defs { position: absolute; }
.serif { font-family: "Liberation Serif", serif; }
.ico { width: 48px; height: 48px; display: block; flex: none; }

.bar { display: flex; flex: none; align-items: center; background: #323232; border-bottom: 1px solid #767676; box-shadow: inset 0 -2px 0 #242424; }
.bar1 { height: 63px; align-items: flex-start; }
.bar2 { height: 78px; padding-left: 1px; }
.bar3 { height: 77px; border-bottom-width: 2px; }
.cell { flex: none; display: flex; justify-content: center; align-items: center; position: relative; }
.cell.icon { width: 66px; height: 48px; }
.bar1 .cell.icon { margin-top: -2px; }
.bar2 .cell { top: -1px; }
.cell.off .ico { opacity: .27; filter: grayscale(.6); }
.cell.grip { width: 33px; height: 36px; }
.cell.grip::before { content: ""; width: 10px; height: 35px; margin-left: 13px; background-image: conic-gradient(from 0deg at 4px 4px, transparent 0 270deg, #858585 0); background-size: 6px 6.200px; }
.bar1 .grip { margin-top: 5px; }
.bar2 .grip { top: 3px; }
.bar2 .cell.grip::before { margin-left: 10px; }
.cell.drop { width: 23.500px; height: 48px; }
.bar2 .drop { width: 22px; }
.cell.drop::before { content: ""; margin-right: 4px; border: 8px solid transparent; border-top-color: #b4b4b4; border-bottom: 0; }
.bar2 .drop::before { margin-top: -2px; }
.cell.sep { width: 14px; height: 40px; }
.cell.sep::before { content: ""; width: 2px; height: 100%; background: #2a2a2a; border-right: 1px solid #3a3a3a; margin-left: 8px; }
.framed::after { content: ""; position: absolute; left: 3px; right: 2px; top: -8px; bottom: -7px; border: 2px solid #555; border-radius: 5px; outline: 2px solid #272727; }
.tri { display: block; border: 7px solid transparent; border-top: 7px solid #b8b8b8; border-bottom: 0; }
.tri.small { position: absolute; border-width: 6px 6px 0; border-top-color: #c4c4c4; }
.bar1 .tri.small { right: 5px; bottom: 0; }
.tolerance { margin-left: 5px; flex: 1; height: 49px; background: #1e1e1e; border: 3px solid #292929; border-width: 0 0 3px 3px; border-radius: 0 0 0 4px; color: #5e5e5e; padding-left: 3px; line-height: 49px; font-size: 35px; letter-spacing: -1px; }
.sliver { width: 27px; height: 50px; position: relative; flex: none; }
.leaf { position: absolute; left: -9px; top: 4px; width: 12px; height: 10px; border-radius: 50%; background: #8fc48c; }
.star { position: absolute; left: -15px; top: 26px; width: 21px; height: 21px; }
.dim { opacity: .55; }
.vsep { width: 2px; height: 40px; background: #2a2a2a; margin: 0 13px 0 15px; }

.body { flex: none; height: 1678px; display: flex; background: #1b1b1b; }
.left { width: 395px; flex: none; display: flex; flex-direction: column; }
.left > div { flex: none; }
.lhead { height: 109px; background: #323232; border-bottom: 1px solid #3a3a3a; }
.tree { height: 817px; background: #1e1e1e; padding-top: 49px; }
.t { height: 48px; line-height: 48px; }
.t span, .lsel span, .llist span, .s1 span { display: flex; justify-content: flex-end; }
.t1 { margin-left: -18px; margin-bottom: 240px; letter-spacing: .1px; }
.t2 span { width: 13px; }
.t3 { margin-left: -12px; }
.t4 span { width: 31px; }
.hl { height: 48px; background: #444; }
.split { height: 18px; }
.ltools { height: 123px; background: #323232; border-top: 1px solid #3a3a3a; padding: 6px 0 0 8px; }
.hgrip { display: block; width: 34px; height: 4px; background: repeating-linear-gradient(90deg, #8a8a8a 0 4px, transparent 4px 6px); }
.licons { display: flex; gap: 20px; margin: 64px 0 0 -8px; }
.lsel { height: 49px; background: #464646; font-weight: 700; color: #fff; line-height: 50px; }
.lsel span { width: 27px; border-bottom: 3px solid #fff; height: 47px; }
.llist { flex: 1 !important; background: #1e1e1e; font-weight: 700; padding-top: 96px; line-height: 48px; }
.llist span { width: 29px; }
.map { width: 1871px; margin: 0 14px 0 15px; background: repeating-linear-gradient(100deg, #ecece8 0 90px, #e2e4e0 90px 160px, #d6d8d4 160px 163px); flex: none; }
.right { flex: 1; background: #323232; min-width: 0; display: flex; flex-direction: column; }
.right > div { flex: none; }
.g1 { height: 54px; } .g2 { height: 28px; }
.rbtn { height: 57px; background: linear-gradient(#484848, #3c3c3c); border: solid #5a5a5a; border-width: 2px 0; outline: 2px solid #282828; color: #000; line-height: 57px; }
.rbtn span, .rfield span, .rlist span, .render span { display: flex; justify-content: flex-end; }
.rbtn span { width: 368px; }
.b2 { line-height: 53px; }
.preview { height: 319px; border-bottom: 1px solid #aaa; position: relative; display: flex; justify-content: space-between; }
.rule { width: 333px; height: 2px; background: #7c7c7c; margin-top: 159px; }
.combo { width: 28px; margin-top: 12px; height: 293px; background: #1e1e1e; border: solid #292929; border-width: 2px 0 0 2px; }
.combo b { display: flex; height: 49px; background: #464646; justify-content: center; align-items: center; padding-left: 14px; }
.combo .tri { border-width: 8px 8px 0; flex: none; }
.colour { margin-top: 19px; height: 53px; background: #3f3f3f; border: solid #5a5a5a; border-width: 2px 0; outline: 2px solid #282828; padding: 8px 0; }
.swatch { height: 33px; background: #e67349; }
.slider { height: 85px; padding-top: 38px; }
.slider i { display: block; height: 7px; background: linear-gradient(#4f92dc, #68a8f0); outline: 1px solid #222; }
.rfield { height: 56px; background: #1e1e1e; border: solid #282828; border-width: 2px 0; line-height: 56px; margin-bottom: 16px; display: flex; font-size: 35px; letter-spacing: -.4px; }
.f1 span { width: 385px; } .f2 span { width: 320px; }
.f2 em { font-style: normal; margin-left: 10px; }
.f2 { margin-bottom: 26px; position: relative; }
.f2::after { content: ""; position: absolute; left: 0; right: 0; top: 64px; height: 2px; background: #aaa; }
.f3 { margin-bottom: 11px; font-size: 30px; } .f3 span { width: 298px; }
.rlist { height: 485px; background: #1e1e1e; display: flex; flex-direction: column; }
.rlist i { height: 2px; background: #707070; margin-top: 66px; }
.rlist span { width: 311px; font-size: 21px; margin-top: 293px; }
.render { height: 236px; font-weight: 700; padding-top: 117px; border-bottom: 2px solid #272727; line-height: 46px; font-size: 34px; letter-spacing: -.5px; }
.render span { width: 410px; }
.proc { height: 56px; border-bottom: 2px solid #585858; line-height: 63px; padding-left: 283px; background: #2e2e2e; }

.status { flex: none; height: 64px; padding-top: 10px; background: #323232; display: flex; font-size: 32px; line-height: 59px; }
.status > div { height: 60px; flex: none; }
.sl { letter-spacing: -.7px; }
.sf { background: #1d1d1d; border-top: 2px solid #272727; line-height: 55px; }
.s1 { width: 217px; } .s1 span { width: 30px; }
.s2 { width: 980px; padding-left: 17px; letter-spacing: -.53px; }
.s3 { width: 166px; padding-left: 0; } .s4 { width: 334px; padding-left: 22px; }
.s5 { width: 68px; padding: 10px 0 0 9px; line-height: 0; }
.s6 { width: 86px; } .s7 { width: 185px; padding-left: 7px; }
.sbtn { width: 41px; background: #414141; border-top: 2px solid #555; border-right: 2px solid #666; display: flex; justify-content: center; padding-top: 24px; }
.tri.black { border-top-color: #111; border-width: 8px 8px 0; height: 9px; }
.s9 { width: 68px; padding: 11px 0 0 24px; line-height: 0; }
.s10 { width: 143px; } .s11 { width: 180px; padding-left: 8px; }
.spin { width: 50px; background: linear-gradient(90deg, #414141 26px, #666 26px 28px, transparent 28px); padding: 14px 0 0 6px; display: flex; flex-direction: column; gap: 15px; }
.spin .tri { align-self: flex-start; border-width: 8px 8px 0; }
.tri.up { transform: rotate(180deg); }
.s13 { width: 138px; padding-left: 0; }
.s14 { flex: 1 !important; padding-left: 11px; }

.win { position: absolute; left: 150px; top: 102px; width: 2437px; height: 1788px; border: 2px solid #5e605f; border-top-color: #7a7c7c; border-radius: 20px; background: #1e1e1e; outline: 1px solid #000; box-shadow: 0 36px 80px rgba(0, 0, 0, .62); overflow: hidden; display: flex; flex-direction: column; }
.title { height: 55px; flex: none; background: #363839; border-bottom: 1px solid #000; display: flex; align-items: center; justify-content: center; position: relative; color: #a6a7a8; font-weight: 700; font-size: 26px; letter-spacing: .25px; padding: 0 0 3px 4px; }
.lights { position: absolute; left: 14px; top: 14px; display: flex; gap: 16px; }
.lights i { width: 24px; height: 24px; border-radius: 50%; background: #f15f53; }
.lights .amber { background: #f8b043; } .lights .green { background: #4fb948; }
.wtools { height: 63px; flex: none; background: #323232; display: flex; align-items: center; padding-left: 6px; padding-bottom: 3px; border-bottom: 2px solid #282828; }
.wtools .cell.icon { width: 49.700px; }
.wtools .cell.sep { width: 15.600px; }
.wtools .ico { width: 31px; height: 31px; }
.wtools .tri.small { right: 6px; bottom: 5px; }
.thead { height: 52px; flex: none; background: #323232; display: flex; color: #000; line-height: 52px; text-align: center; }
.thead > div { height: 50px; background: linear-gradient(#414141, #383838); border-top: 1px solid #555; border-bottom: 2px solid #262626; line-height: 54px; }
.h0 { width: 32px; } .h1 { width: 374px; border-right: 1px solid #555; padding-left: 5px; }
.h2 { width: 439px; border-left: 3px solid #333; padding-left: 1px; }
.tbody { flex: 1; display: flex; flex-direction: column; background: #1e1e1e; }
.row { height: 60px; display: flex; width: 845px; flex: none; line-height: 57px; }
.row > div { border-bottom: 2px solid #282828; }
.num { width: 32px; background: #323232; color: #000; text-align: center; border-bottom: 0 !important; }
.num span { display: block; height: 58px; width: 30px; background: linear-gradient(#444, #383838); border-top: 1px solid #585858; line-height: 60px; }
.c1 { width: 374px; border-left: 1px solid #292929; padding-left: 5px; display: flex; justify-content: space-between; letter-spacing: .1px; }
.edit .c1 { box-shadow: inset 0 0 0 4px #1a1a1a; line-height: 61px; letter-spacing: 0; }
.c1 svg { margin: 18px 11px 0 0; }
.c2 { width: 439px; border-left: 1px solid #2a2a2a; border-right: 1px solid #2a2a2a; padding-left: 9px; }
.alt .c1, .alt .c2 { background: #292929; }
.alt .c1 { letter-spacing: .4px; }
.gutter { flex: 1; width: 32px; background: #323232; }
.wfoot { height: 70px; flex: none; background: #323232; border-top: 1px solid #3a3a3a; display: flex; justify-content: space-between; padding: 8px 7px 0 6px; }
.show { position: relative; width: 359px; height: 55px; border: 2px solid #606060; border-radius: 5px; outline: 2px solid #292929; background: linear-gradient(#474747, #3b3b3b); color: #000; display: flex; align-items: center; padding-left: 3px; padding-bottom: 2px; letter-spacing: -.25px; }
.show .ico, .views .ico { width: 31px; height: 32px; }
.show span { margin-left: 4px; padding-top: 2px; }
.show .tri { right: 3px; bottom: 3px; border-top-color: #d0d0d0; }
.views { display: flex; gap: 9px; align-items: center; height: 53px; }
.active { width: 45px; height: 44px; border: 2px solid #505050; border-radius: 5px; outline: 2px solid #282828; background: #353535; display: flex; align-items: center; justify-content: center; }

.mark { position: absolute; border: 10px solid #d1341b; }
.m1 { left: 139px; top: 151px; width: 95px; height: 82px; }
.m2 { left: 539px; top: 202px; width: 480px; height: 264px; }
.note { position: absolute; left: 227px; top: 636px; font: 900 68px/80px Lato, sans-serif; letter-spacing: 2.200px; color: #d1341b; -webkit-text-stroke: .8px #d1341b; }
</style>
